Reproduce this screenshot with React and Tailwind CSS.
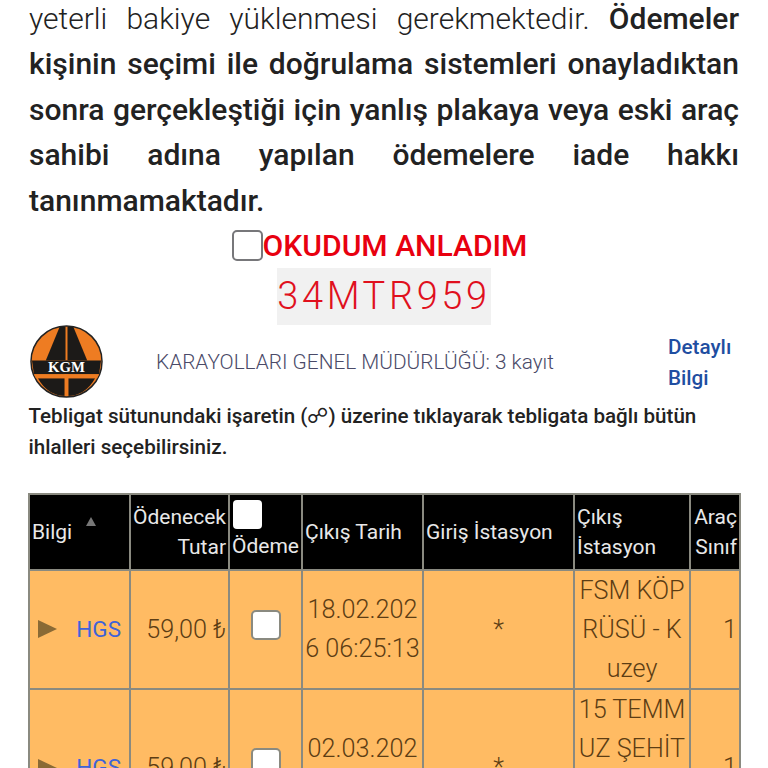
const Row = ({ date, exit }) => (
  <tr className="bg-[#ffbb63] text-[#5c3d14] text-[25.2px] leading-[39px] font-light">
    <td className="border-2 border-[#8a8a80] pl-[6px] pr-2">
      <div className="flex items-center justify-between">
        <svg width="20" height="20" viewBox="0 0 20 20" className="shrink-0 ml-0.5"><path d="M0 1 L19 10 L0 19 Z" fill="#8a6a35" /></svg>
        <span className="text-[#3f63d8] text-[22.5px] font-normal">HGS</span>
      </div>
    </td>
    <td className="border-2 border-[#8a8a80] text-right pr-0.5 whitespace-nowrap">59,00 ₺</td>
    <td className="border-2 border-[#8a8a80] text-center">
      <span className="inline-block align-middle w-[30px] h-[30px] mb-[10px] bg-white border-2 border-[#8a8a80] rounded-[5px]" />
    </td>
    <td className="border-2 border-[#8a8a80] text-center break-all">{date}</td>
    <td className="border-2 border-[#8a8a80] text-center">*</td>
    <td className="border-2 border-[#8a8a80] text-center break-all px-0.5">{exit}</td>
    <td className="border-2 border-[#8a8a80] text-right pr-0.5">1</td>
  </tr>
);

export default function App() {
  return (
    <div className="h-[768px] overflow-hidden bg-white font-['Roboto',sans-serif] px-[29px]">
      <p className="-mt-[4.5px] text-[30px] leading-[45.5px] text-[#222222] text-justify font-light">
        yeterli bakiye yüklenmesi gerekmektedir.{" "}
        <strong className="font-medium">
          Ödemeler kişinin seçimi ile doğrulama sistemleri onayladıktan sonra gerçekleştiği için yanlış plakaya veya eski araç sahibi adına yapılan ödemelere iade hakkı tanınmamaktadır.
        </strong>
      </p>
      <div className="flex items-center justify-center h-[46px] -mt-[0.5px] pr-[9px]">
        <span className="w-[31px] h-[31px] bg-white border-2 border-[#77777a] rounded-[5px]" />
        <span className="text-[#e8000f] text-[30.1px] font-medium leading-[46px]">OKUDUM ANLADIM</span>
      </div>
      <div className="flex justify-center -mt-[1px]">
        <div className="bg-[#f1f1f1] h-[57px] w-[214px] flex items-center justify-center text-[#e0101d] text-[38px] font-light tracking-[3.6px]">
          34MTR959
        </div>
      </div>
      <div className="flex items-center h-[79px] -mt-[1px]">
        <svg width="73" height="73" viewBox="0 0 74 74" className="shrink-0 ml-[1px] -mt-[4px]">
          <circle cx="37" cy="37" r="36" fill="#ee7c22" stroke="#222" strokeWidth="1.5" />
          <path d="M30 2 L44 2 L58 36 L16 36 Z" fill="#1c1a18" />
          <rect x="36" y="2" width="2" height="34" fill="#ee7c22" />
          <path d="M2 36 L72 36 L70 50 L4 50 Z" fill="#1c1a18" />
          <path d="M8 54 L66 54 Q56 72 37 72 Q18 72 8 54 Z" fill="#1c1a18" />
          <rect x="35" y="50" width="4" height="22" fill="#ee7c22" />
          <path d="M4 50 L70 50 L68 54 L6 54 Z" fill="#ee7c22" />
          <text x="37" y="48" textAnchor="middle" fill="#fff" fontSize="15" fontWeight="700" fontFamily="Liberation Serif, serif">KGM</text>
        </svg>
        <span className="ml-[53px] w-[512px] text-[20.8px] font-light text-[#4a4a68] -mt-[1px]">KARAYOLLARI GENEL MÜDÜRLÜĞÜ: 3 kayıt</span>
        <span className="text-[#1f4ea1] text-[20.7px] leading-[31px] font-medium w-[70px]">Detaylı Bilgi</span>
      </div>
      <p className="text-[20.6px] leading-[31.5px] font-medium text-[#222] -mt-[2px] -ml-[0.5px]">
        Tebligat sütunundaki işaretin (☍) üzerine tıklayarak tebligata bağlı bütün ihlalleri seçebilirsiniz.
      </p>
      <table className="mt-[29px] -ml-[1px] w-[711px] table-fixed border-collapse">
        <colgroup>
          <col className="w-[101px]" />
          <col className="w-[99px]" />
          <col className="w-[73px]" />
          <col className="w-[121px]" />
          <col className="w-[151px]" />
          <col className="w-[116px]" />
          <col className="w-[50px]" />
        </colgroup>
        <thead>
          <tr className="bg-black text-[#e8e8e8] text-[21px] leading-[30px] h-[76px] font-normal">
            <th className="border-2 border-[#8a8a80] text-left font-normal pl-[2px]">
              <div className="flex">
                <span>Bilgi</span>
                <svg width="10" height="9" viewBox="0 0 10 9" className="ml-[14px] mt-0"><path d="M5 0 L10 9 L0 9 Z" fill="#777" /></svg>
              </div>
            </th>
            <th className="border-2 border-[#8a8a80] text-right font-normal pr-0.5 overflow-hidden">Ödenecek Tutar</th>
            <th className="border-2 border-[#8a8a80] font-normal text-center whitespace-nowrap">
              <div className="flex flex-col items-start pl-[2px] -mt-[5px]">
                <span className="w-[29px] h-[29px] bg-white rounded-[4px] ml-[1px]" />
                <span className="mt-[2px] h-[27px]">Ödeme</span>
              </div>
            </th>
            <th className="border-2 border-[#8a8a80] text-left font-normal pl-0.5">Çıkış Tarih</th>
            <th className="border-2 border-[#8a8a80] text-left font-normal pl-0.5">Giriş İstasyon</th>
            <th className="border-2 border-[#8a8a80] text-left font-normal pl-0.5">Çıkış İstasyon</th>
            <th className="border-2 border-[#8a8a80] text-right font-normal pr-0.5">Araç Sınıf</th>
          </tr>
        </thead>
        <tbody>
          <Row date="18.02.2026 06:25:13" exit="FSM KÖPRÜSÜ - Kuzey" />
          <Row date="02.03.2026 07:41:52" exit="15 TEMMUZ ŞEHİTLER KÖPRÜSÜ" />
        </tbody>
      </table>
    </div>
  );
}
